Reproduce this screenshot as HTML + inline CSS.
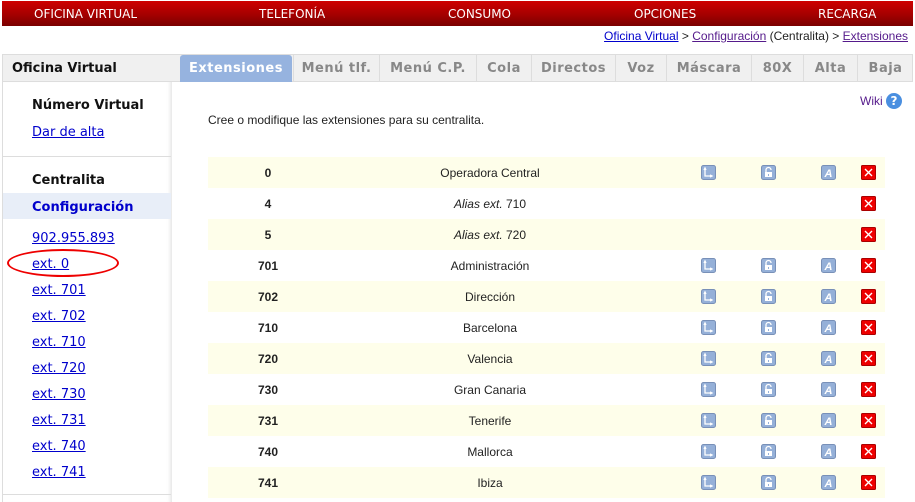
<!DOCTYPE html><html><head><meta charset="utf-8"><style>
*{margin:0;padding:0;box-sizing:border-box}
body{width:915px;height:498px;overflow:hidden;background:#fff;font-family:"DejaVu Sans","Liberation Sans",sans-serif;position:relative}
.top{position:absolute;left:2px;top:1px;width:911px;height:25px;background:linear-gradient(#cf0000,#a00000 60%,#7a0000);color:#fff;font-size:12px}
.top span{position:absolute;top:6px}
.bc{position:absolute;right:7px;top:29px;font-size:12px;font-family:"Liberation Sans",sans-serif;color:#222}
.bc a{color:#551a8b}.bc a.b{color:#00c}
.tabrow{position:absolute;left:2px;top:54px;width:911px;height:28px;background:#f0f0f0;border:1px solid #ddd;border-bottom:1px solid #ddd}
.sh{position:absolute;left:12px;top:61px;font-weight:bold;font-size:13px;color:#111}
.tab{position:absolute;top:55px;height:27px;font-weight:bold;font-size:13px;color:#888;text-align:center;line-height:27px;border-left:1px solid #ddd;letter-spacing:.5px}
.tab.on{background:#96b3df;color:#fff;border-radius:3px 3px 0 0}
.side{position:absolute;left:2px;top:82px;width:170px;height:420px;border-left:1px solid #ddd;box-shadow:inset -5px 0 5px -4px #ddd}
.content{position:absolute;left:172px;top:82px;width:741px;height:420px;background:#fff}
.s{position:absolute;left:32px;font-size:13px}
.s.h{font-weight:bold;color:#111}
.s.l{color:#00c;text-decoration:underline}
.row{position:absolute;left:208px;width:677px;height:31px;font-family:"Liberation Sans",sans-serif;font-size:12px;color:#222}
.row.y{background:#fefeea}
.num{position:absolute;left:0;width:120px;text-align:center;top:9px;font-weight:bold}
.nm{position:absolute;left:182px;width:200px;text-align:center;top:9px}
.ic{position:absolute;top:8px;width:15px;height:15px}
.x{position:absolute;left:653px;top:8px;width:15px;height:15px}
</style></head><body>
<svg width="0" height="0" style="position:absolute"><defs>
<symbol id="a" viewBox="0 0 15 15"><rect x=".5" y=".5" width="14" height="14" rx="2" fill="#95b0d8" stroke="#7890b8"/><path d="M4 3v8h6M3 5l1-2 1 2M9 10l2 1-2 1" stroke="#fff" stroke-width="1.3" fill="none"/></symbol>
<symbol id="b" viewBox="0 0 15 15"><rect x=".5" y=".5" width="14" height="14" rx="2" fill="#95b0d8" stroke="#7890b8"/><path d="M5 7V5a2.5 2.5 0 0 1 5 0" stroke="#fff" stroke-width="1.3" fill="none"/><rect x="4" y="7" width="7" height="5" fill="#fff"/><rect x="7" y="9" width="1" height="2" fill="#95b0d8"/></symbol>
<symbol id="c" viewBox="0 0 15 15"><rect x=".5" y=".5" width="14" height="14" rx="2" fill="#95b0d8" stroke="#7890b8"/><text x="7.5" y="12" text-anchor="middle" font-family="Liberation Sans" font-weight="bold" font-style="italic" font-size="11" fill="#fff">A</text></symbol>
<symbol id="d" viewBox="0 0 15 15"><rect x=".5" y=".5" width="14" height="14" rx="1" fill="#e00" stroke="#a00"/><path d="M4 4l7 7M11 4l-7 7" stroke="#fff" stroke-width="1.4"/></symbol>
</defs></svg>
<div class="top"><span style="left:32px">OFICINA VIRTUAL</span><span style="left:257px">TELEFONÍA</span><span style="left:446px">CONSUMO</span><span style="left:632px">OPCIONES</span><span style="left:816px">RECARGA</span></div>
<div class="bc"><a class="b" href="#">Oficina Virtual</a> &gt; <a href="#">Configuración</a> (Centralita) &gt; <a href="#">Extensiones</a></div>
<div class="tabrow"></div>
<div class="sh">Oficina Virtual</div>
<div class="tab on" style="left:180px;width:112px;border:none">Extensiones</div>
<div class="tab" style="left:293px;width:86px">Menú tlf.</div>
<div class="tab" style="left:379px;width:97px">Menú C.P.</div>
<div class="tab" style="left:476px;width:55px">Cola</div>
<div class="tab" style="left:531px;width:84px">Directos</div>
<div class="tab" style="left:615px;width:51px">Voz</div>
<div class="tab" style="left:666px;width:85px">Máscara</div>
<div class="tab" style="left:751px;width:52px">80X</div>
<div class="tab" style="left:803px;width:54px">Alta</div>
<div class="tab" style="left:857px;width:56px">Baja</div>
<div class="side"></div>
<div style="position:absolute;left:3px;top:156px;width:168px;border-top:1px solid #ddd"></div>
<div style="position:absolute;left:3px;top:193px;width:168px;height:26px;background:#e8eef8"></div>
<div style="position:absolute;left:3px;top:494px;width:168px;border-top:1px solid #ddd"></div>
<div class="s h" style="top:98px">Número Virtual</div>
<div class="s l" style="top:125px">Dar de alta</div>
<div class="s h" style="top:173px">Centralita</div>
<div class="s h" style="top:200px;color:#00c">Configuración</div>
<div class="s l" style="top:231px">902.955.893</div>
<div class="s l" style="top:257px">ext. 0</div>
<div style="position:absolute;left:7px;top:249px;width:112px;height:28px;border:2px solid #e00;border-radius:50%"></div>
<div class="s l" style="top:283px">ext. 701</div>
<div class="s l" style="top:309px">ext. 702</div>
<div class="s l" style="top:335px">ext. 710</div>
<div class="s l" style="top:361px">ext. 720</div>
<div class="s l" style="top:387px">ext. 730</div>
<div class="s l" style="top:413px">ext. 731</div>
<div class="s l" style="top:439px">ext. 740</div>
<div class="s l" style="top:465px">ext. 741</div>
<div class="content"></div>
<div style="position:absolute;left:208px;top:113px;font-size:12px;font-family:'Liberation Sans',sans-serif;color:#222">Cree o modifique las extensiones para su centralita.</div>
<div style="position:absolute;left:860px;top:94px;font-size:12px;font-family:'Liberation Sans',sans-serif;color:#551a8b">Wiki</div>
<div style="position:absolute;left:886px;top:93px;width:16px;height:16px;border-radius:50%;background:#4a8fe0;color:#fff;font-size:12px;font-weight:bold;text-align:center;line-height:16px">?</div>
<div class="row y" style="top:157px"><div class="num">0</div><div class="nm">Operadora Central</div><svg class="ic" style="left:493px"><use href="#a"/></svg><svg class="ic" style="left:553px"><use href="#b"/></svg><svg class="ic" style="left:613px"><use href="#c"/></svg><svg class="x"><use href="#d"/></svg></div>
<div class="row" style="top:188px"><div class="num">4</div><div class="nm"><i>Alias ext.</i> 710</div><svg class="x"><use href="#d"/></svg></div>
<div class="row y" style="top:219px"><div class="num">5</div><div class="nm"><i>Alias ext.</i> 720</div><svg class="x"><use href="#d"/></svg></div>
<div class="row" style="top:250px"><div class="num">701</div><div class="nm">Administración</div><svg class="ic" style="left:493px"><use href="#a"/></svg><svg class="ic" style="left:553px"><use href="#b"/></svg><svg class="ic" style="left:613px"><use href="#c"/></svg><svg class="x"><use href="#d"/></svg></div>
<div class="row y" style="top:281px"><div class="num">702</div><div class="nm">Dirección</div><svg class="ic" style="left:493px"><use href="#a"/></svg><svg class="ic" style="left:553px"><use href="#b"/></svg><svg class="ic" style="left:613px"><use href="#c"/></svg><svg class="x"><use href="#d"/></svg></div>
<div class="row" style="top:312px"><div class="num">710</div><div class="nm">Barcelona</div><svg class="ic" style="left:493px"><use href="#a"/></svg><svg class="ic" style="left:553px"><use href="#b"/></svg><svg class="ic" style="left:613px"><use href="#c"/></svg><svg class="x"><use href="#d"/></svg></div>
<div class="row y" style="top:343px"><div class="num">720</div><div class="nm">Valencia</div><svg class="ic" style="left:493px"><use href="#a"/></svg><svg class="ic" style="left:553px"><use href="#b"/></svg><svg class="ic" style="left:613px"><use href="#c"/></svg><svg class="x"><use href="#d"/></svg></div>
<div class="row" style="top:374px"><div class="num">730</div><div class="nm">Gran Canaria</div><svg class="ic" style="left:493px"><use href="#a"/></svg><svg class="ic" style="left:553px"><use href="#b"/></svg><svg class="ic" style="left:613px"><use href="#c"/></svg><svg class="x"><use href="#d"/></svg></div>
<div class="row y" style="top:405px"><div class="num">731</div><div class="nm">Tenerife</div><svg class="ic" style="left:493px"><use href="#a"/></svg><svg class="ic" style="left:553px"><use href="#b"/></svg><svg class="ic" style="left:613px"><use href="#c"/></svg><svg class="x"><use href="#d"/></svg></div>
<div class="row" style="top:436px"><div class="num">740</div><div class="nm">Mallorca</div><svg class="ic" style="left:493px"><use href="#a"/></svg><svg class="ic" style="left:553px"><use href="#b"/></svg><svg class="ic" style="left:613px"><use href="#c"/></svg><svg class="x"><use href="#d"/></svg></div>
<div class="row y" style="top:467px"><div class="num">741</div><div class="nm">Ibiza</div><svg class="ic" style="left:493px"><use href="#a"/></svg><svg class="ic" style="left:553px"><use href="#b"/></svg><svg class="ic" style="left:613px"><use href="#c"/></svg><svg class="x"><use href="#d"/></svg></div>
</body></html>
